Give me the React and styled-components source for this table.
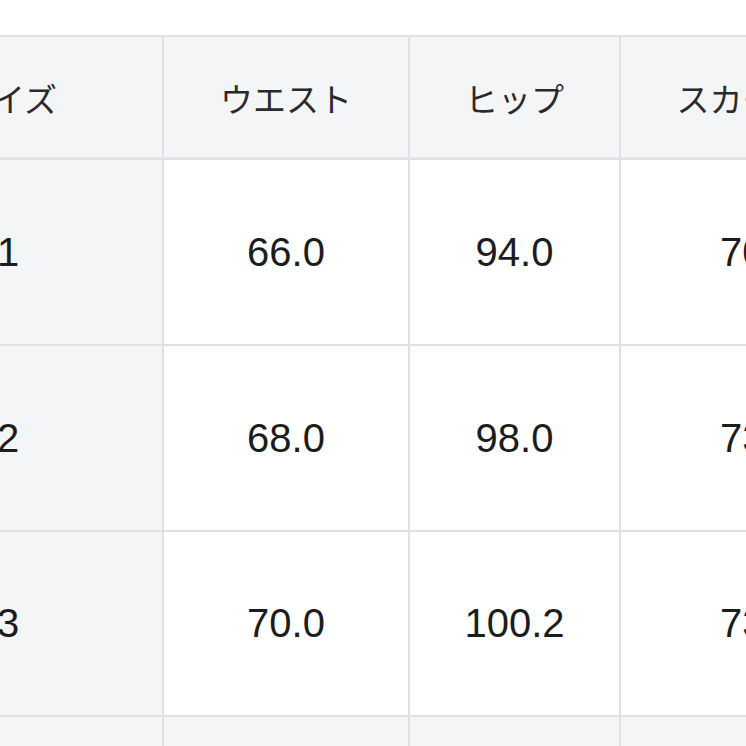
import React from 'react';
import styled, { createGlobalStyle } from 'styled-components';

const GlobalStyle = createGlobalStyle`
  html, body {
    margin: 0;
    padding: 0;
    background: #fff;
    overflow: hidden;
  }
  body {
    width: 746px;
    height: 746px;
  }
`;

const Page = styled.div`
  padding-top: 35px;
  height: 746px;
  overflow: hidden;
  box-sizing: border-box;
`;

const Table = styled.div`
  display: grid;
  grid-template-columns: 308px 244px 209px 276px;
  grid-template-rows: 121px 184px 184px 183px 183px;
  gap: 2px;
  margin-left: -146px;
  width: max-content;
  background: #dfe1e4;
  border-top: 2px solid #dfe1e4;
`;

const Cell = styled.div`
  display: flex;
  align-items: center;
  justify-content: center;
  background: ${p => (p.$shade ? '#f4f5f6' : '#fff')};
  color: #222;
`;

const HeadCell = styled(Cell)`
  background: #f4f5f6;
  box-shadow: inset 0 -1px 0 #e6e8ea;
  font-family: "Noto Sans CJK JP", "Noto Sans", sans-serif;
  font-size: 33px;
  color: #2a2a2a;
`;

const NumCell = styled(Cell)`
  font-family: "Liberation Sans", Arial, sans-serif;
  font-size: 40px;
  color: #1c1c1c;
`;

const headers = ['サイズ', 'ウエスト', 'ヒップ', 'スカート丈'];
const rows = [
  ['1', '66.0', '94.0', '70.0'],
  ['2', '68.0', '98.0', '73.0'],
  ['3', '70.0', '100.2', '73.0'],
  ['', '', '', ''],
];

export default function App() {
  return (
    <Page>
      <GlobalStyle />
      <Table>
        {headers.map(h => (
          <HeadCell key={h}>{h}</HeadCell>
        ))}
        {rows.map((row, ri) =>
          row.map((v, ci) => (
            <NumCell key={`${ri}-${ci}`} $shade={ci === 0 || ri === 3}>
              {v}
            </NumCell>
          ))
        )}
      </Table>
    </Page>
  );
}
